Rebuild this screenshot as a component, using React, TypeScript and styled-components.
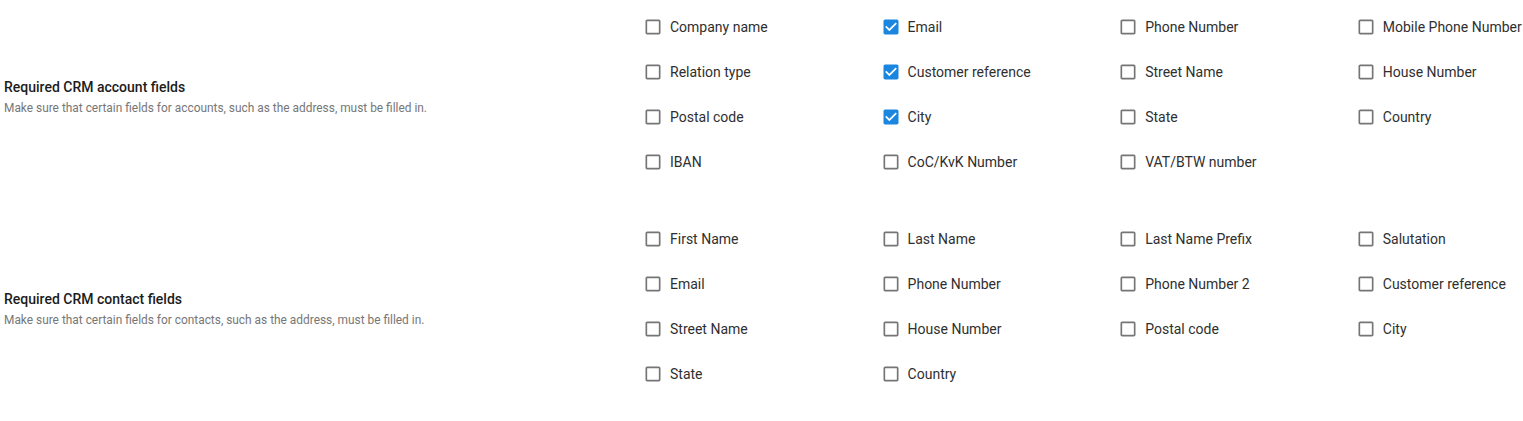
import React from 'react';
import styled, { createGlobalStyle } from 'styled-components';

const GlobalStyle = createGlobalStyle`
  body {
    margin: 0;
    background: #ffffff;
    font-family: Roboto, "Liberation Sans", sans-serif;
    overflow: hidden;
  }
`;

const Page = styled.div`
  display: flex;
  flex-direction: column;
  gap: 32px;
  padding: 4px 0 0 4px;
  overflow: hidden;
`;

const Section = styled.div`
  display: flex;
  align-items: center;
`;

const Info = styled.div`
  width: 634px;
  flex-shrink: 0;
  padding-top: 6px;
`;

const Title = styled.div`
  font-size: 14px;
  font-weight: 500;
  color: #1c1c1c;
  line-height: 18px;
`;

const Description = styled.div`
  font-size: 11.9px;
  color: #777777;
  line-height: 15px;
  margin-top: 5px;
`;

const Grid = styled.div`
  flex: 1;
  min-width: 0;
  display: grid;
  grid-template-columns: repeat(3, 237.6px) minmax(0, 1fr);
  grid-auto-rows: 45px;
`;

const Option = styled.label`
  display: flex;
  align-items: center;
  gap: 2px;
  cursor: pointer;
  white-space: nowrap;
`;

const Box = styled.span`
  width: 30px;
  height: 30px;
  display: flex;
  align-items: center;
  justify-content: center;
  flex-shrink: 0;
`;

const Label = styled.span`
  font-size: 14px;
  color: #2f2f2f;
`;

function CheckIcon({ checked }: { checked: boolean }) {
  if (checked) {
    return (
      <svg width="20" height="20" viewBox="0 0 24 24">
        <path
          fill="#1a86e0"
          d="M19 3H5c-1.11 0-2 .9-2 2v14c0 1.1.89 2 2 2h14c1.11 0 2-.9 2-2V5c0-1.1-.89-2-2-2zm-9 14l-5-5 1.41-1.41L10 14.17l7.59-7.59L19 8l-9 9z"
        />
      </svg>
    );
  }
  return (
    <svg width="20" height="20" viewBox="0 0 24 24">
      <path
        fill="#757575"
        d="M19 5v14H5V5h14m0-2H5c-1.1 0-2 .9-2 2v14c0 1.1.9 2 2 2h14c1.1 0 2-.9 2-2V5c0-1.1-.9-2-2-2z"
      />
    </svg>
  );
}

type Field = { name: string; checked?: boolean };

const sections: { title: string; description: string; fields: Field[] }[] = [
  {
    title: 'Required CRM account fields',
    description: 'Make sure that certain fields for accounts, such as the address, must be filled in.',
    fields: [
      { name: 'Company name' },
      { name: 'Email', checked: true },
      { name: 'Phone Number' },
      { name: 'Mobile Phone Number' },
      { name: 'Relation type' },
      { name: 'Customer reference', checked: true },
      { name: 'Street Name' },
      { name: 'House Number' },
      { name: 'Postal code' },
      { name: 'City', checked: true },
      { name: 'State' },
      { name: 'Country' },
      { name: 'IBAN' },
      { name: 'CoC/KvK Number' },
      { name: 'VAT/BTW number' },
    ],
  },
  {
    title: 'Required CRM contact fields',
    description: 'Make sure that certain fields for contacts, such as the address, must be filled in.',
    fields: [
      { name: 'First Name' },
      { name: 'Last Name' },
      { name: 'Last Name Prefix' },
      { name: 'Salutation' },
      { name: 'Email' },
      { name: 'Phone Number' },
      { name: 'Phone Number 2' },
      { name: 'Customer reference' },
      { name: 'Street Name' },
      { name: 'House Number' },
      { name: 'Postal code' },
      { name: 'City' },
      { name: 'State' },
      { name: 'Country' },
    ],
  },
];

export default function App() {
  return (
    <>
      <GlobalStyle />
      <Page>
        {sections.map((section) => (
          <Section key={section.title}>
            <Info>
              <Title>{section.title}</Title>
              <Description>{section.description}</Description>
            </Info>
            <Grid>
              {section.fields.map((field) => (
                <Option key={field.name}>
                  <Box>
                    <CheckIcon checked={!!field.checked} />
                  </Box>
                  <Label>{field.name}</Label>
                </Option>
              ))}
            </Grid>
          </Section>
        ))}
      </Page>
    </>
  );
}
